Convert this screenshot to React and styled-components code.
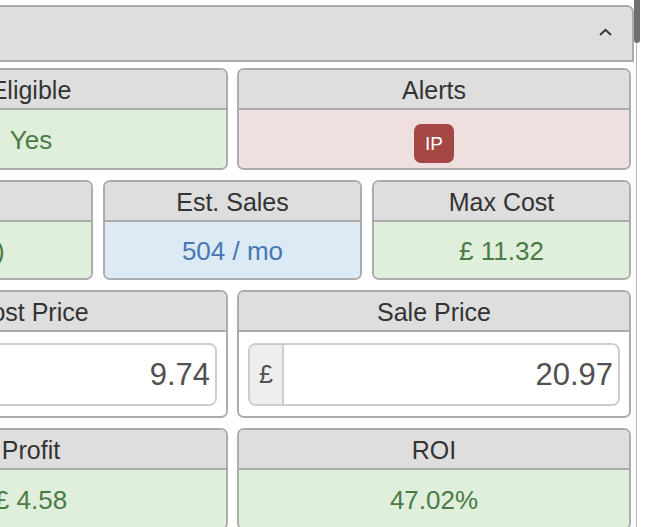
import React from 'react';
import styled, { createGlobalStyle } from 'styled-components';

const GlobalStyle = createGlobalStyle`
  html, body {
    margin: 0;
    padding: 0;
    background: #ffffff;
    overflow: hidden;
  }
  body {
    font-family: "Liberation Sans", Arial, Helvetica, sans-serif;
  }
`;

const colors = {
  border: '#acacac',
  head: '#dedede',
  headText: '#333333',
  green: '#e0efdb',
  greenText: '#4a7b45',
  blue: '#dbeaf4',
  blueText: '#4677b2',
  red: '#f0dfdf',
  badge: '#a54744',
  inputBorder: '#cdcdcd',
  inputText: '#505050',
};

const Frame = styled.div`
  display: flex;
  align-items: flex-start;
  width: 646px;
  height: 527px;
  overflow: hidden;
`;

const Panel = styled.div`
  flex: 1;
  margin-left: -171px;
  min-width: 0;
`;

const PanelHead = styled.div`
  margin: 5px 2px 0 0;
  height: 53px;
  background: ${colors.head};
  border: 2px solid ${colors.border};
  border-top-right-radius: 7px;
  display: flex;
  align-items: center;
  justify-content: flex-end;
  padding-right: 20px;
`;

const Chevron = () => (
  <svg width="13" height="8" viewBox="0 0 13 8" style={{ marginTop: -4 }}>
    <polyline points="1,7 6.5,1.8 12,7" fill="none" stroke="#333" strokeWidth="1.8" />
  </svg>
);

const PanelBody = styled.div`
  padding: 6px 5px 0 5px;
  display: flex;
  flex-direction: column;
  gap: 10px;
`;

const Row = styled.div`
  flex-shrink: 0;
  display: grid;
  grid-template-columns: repeat(${p => p.$cols}, 1fr);
  column-gap: ${p => (p.$cols === 3 ? 10 : 9)}px;
`;

const Card = styled.div`
  border: 2px solid ${colors.border};
  border-radius: 7px;
  overflow: hidden;
  display: flex;
  flex-direction: column;
`;

const CardHead = styled.div`
  flex-shrink: 0;
  height: 38px;
  background: ${colors.head};
  border-bottom: 2px solid ${colors.border};
  color: ${colors.headText};
  font-size: 25px;
  line-height: 40px;
  text-align: center;
  white-space: nowrap;
`;

const tones = {
  green: [colors.green, colors.greenText],
  blue: [colors.blue, colors.blueText],
  red: [colors.red, colors.greenText],
  plain: ['#ffffff', colors.inputText],
};

const CardBody = styled.div`
  flex-shrink: 0;
  box-sizing: border-box;
  height: ${p => p.$h}px;
  background: ${p => tones[p.$tone][0]};
  color: ${p => tones[p.$tone][1]};
  font-size: 26px;
  display: flex;
  align-items: center;
  justify-content: center;
  white-space: nowrap;
  padding: ${p => (p.$tone === 'plain' ? '0 9px' : '2px 0 0')};
`;

const Badge = styled.span`
  display: inline-flex;
  align-items: center;
  justify-content: center;
  width: 40px;
  height: 39px;
  border-radius: 7px;
  background: ${colors.badge};
  color: #ffffff;
  font-size: 19px;
  margin-top: 7px;
`;

const InputGroup = styled.div`
  flex: 1;
  display: flex;
  height: 59px;
  border: 2px solid ${colors.inputBorder};
  border-radius: 8px;
  overflow: hidden;
`;

const Addon = styled.span`
  width: 32px;
  background: #eeeeee;
  border-right: 2px solid ${colors.inputBorder};
  color: ${colors.inputText};
  font-size: 25px;
  display: flex;
  align-items: center;
  justify-content: center;
`;

const Input = styled.input`
  flex: 1;
  min-width: 0;
  border: 0;
  outline: 0;
  padding: 2px 5px 0 0;
  font-family: inherit;
  font-size: 31px;
  color: ${colors.inputText};
  text-align: right;
  background: #ffffff;
`;

const Track = styled.div`
  align-self: stretch;
  width: 9px;
  border-left: 1px solid #b9b9b9;
`;

const Thumb = styled.div`
  width: 6px;
  height: 43px;
  margin-left: -3px;
  background: #6f6f6f;
  border-radius: 0 0 3px 3px;
`;

const PriceInput = ({ value }) => (
  <InputGroup>
    <Addon>£</Addon>
    <Input readOnly value={value} />
  </InputGroup>
);

const App = () => {
  return (
    <>
      <GlobalStyle />
      <Frame>
        <Panel>
          <PanelHead>
            <Chevron />
          </PanelHead>
          <PanelBody>
            <Row $cols={2}>
              <Card>
                <CardHead>Eligible</CardHead>
                <CardBody $tone="green" $h={58}>Yes</CardBody>
              </Card>
              <Card>
                <CardHead>Alerts</CardHead>
                <CardBody $tone="red" $h={58}>
                  <Badge>IP</Badge>
                </CardBody>
              </Card>
            </Row>
            <Row $cols={3}>
              <Card>
                <CardHead>Rank</CardHead>
                <CardBody $tone="green" $h={56}>813 (2)</CardBody>
              </Card>
              <Card>
                <CardHead>Est. Sales</CardHead>
                <CardBody $tone="blue" $h={56}>504 / mo</CardBody>
              </Card>
              <Card>
                <CardHead>Max Cost</CardHead>
                <CardBody $tone="green" $h={56}>£ 11.32</CardBody>
              </Card>
            </Row>
            <Row $cols={2}>
              <Card>
                <CardHead>Cost Price</CardHead>
                <CardBody $tone="plain" $h={84}>
                  <PriceInput value="9.74" />
                </CardBody>
              </Card>
              <Card>
                <CardHead>Sale Price</CardHead>
                <CardBody $tone="plain" $h={84}>
                  <PriceInput value="20.97" />
                </CardBody>
              </Card>
            </Row>
            <Row $cols={2}>
              <Card>
                <CardHead>Profit</CardHead>
                <CardBody $tone="green" $h={58}>£ 4.58</CardBody>
              </Card>
              <Card>
                <CardHead>ROI</CardHead>
                <CardBody $tone="green" $h={58}>47.02%</CardBody>
              </Card>
            </Row>
          </PanelBody>
        </Panel>
        <Track>
          <Thumb />
        </Track>
      </Frame>
    </>
  );
};

export default App;
